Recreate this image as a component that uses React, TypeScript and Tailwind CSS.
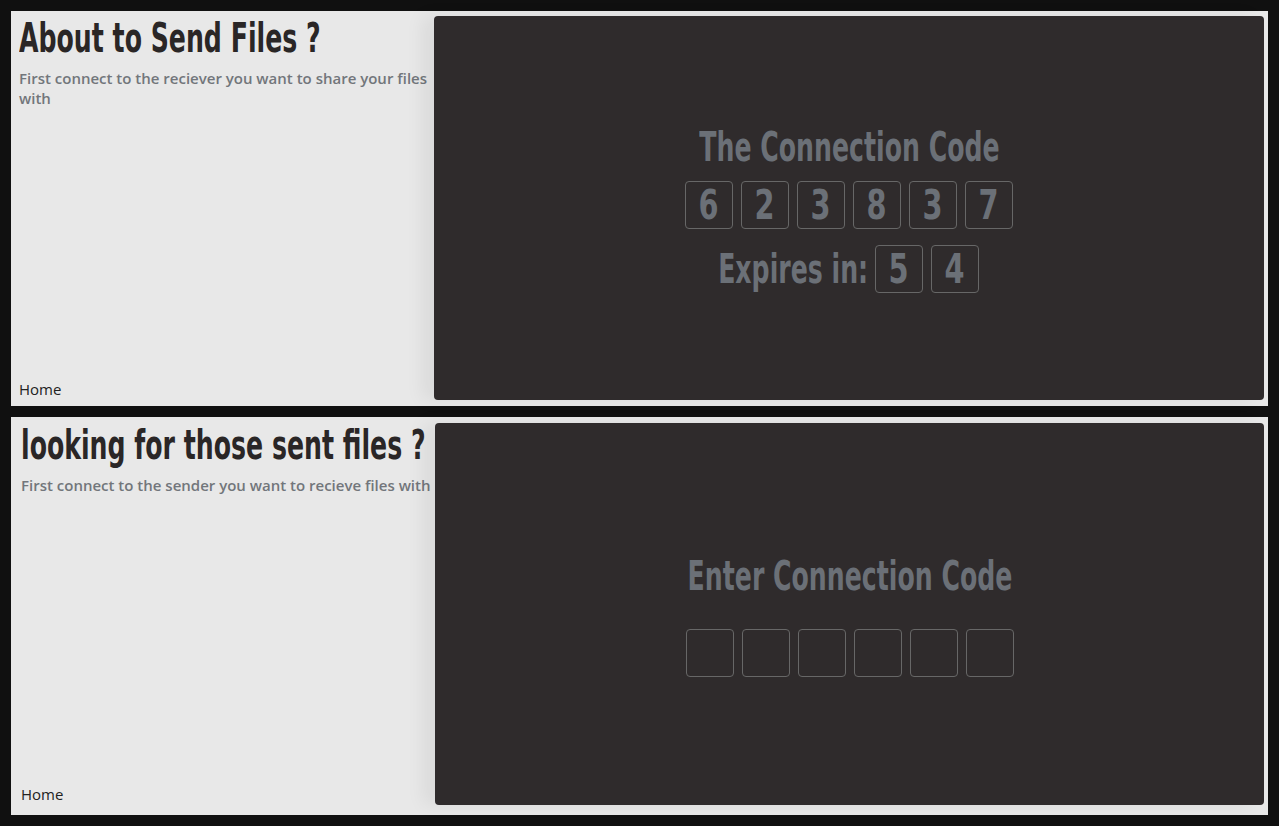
import React from 'react';

// no condensed face is installed, so the Oswald-like headings are DejaVu Condensed squeezed a bit
const headFont = { fontFamily: '"DejaVu Sans Condensed", "Liberation Sans", sans-serif' };

const CodeBox: React.FC<{ value?: string }> = ({ value = '' }) => (
  <div className="w-[48px] h-[48px] border border-[#676767] rounded-[4px] flex items-center justify-center text-[40px] leading-[48px] font-bold text-[#6b7077]">
    <span className="inline-block scale-x-[0.8]">{value}</span>
  </div>
);

const Side: React.FC<{ title: string; sub: string; className?: string }> = ({ title, sub, className = '' }) => (
  <div className={`shrink-0 flex flex-col justify-between ${className}`}>
    <div>
      <h1 className="text-[40px] leading-[44px] font-bold text-[#2a2626] whitespace-nowrap" style={headFont}>
        <span className="inline-block origin-left scale-x-[0.7]">{title}</span>
      </h1>
      <p className="mt-[8px] text-[15px] leading-[20px] font-semibold text-[#72767b] font-['Open_Sans',sans-serif]">{sub}</p>
    </div>
    <div className="text-[15px] text-[#222] font-['Open_Sans',sans-serif]">Home</div>
  </div>
);

const Title: React.FC<{ children: React.ReactNode }> = ({ children }) => (
  <div className="text-[40px] font-bold text-[#6b7077] leading-[48px] whitespace-nowrap">
    <span className="inline-block scale-x-[0.7]">{children}</span>
  </div>
);

export default function App() {
  const code = ['6', '2', '3', '8', '3', '7'];
  return (
    <div className="min-h-screen bg-[#101010] p-[11px] flex flex-col gap-[11px]">
      <section className="h-[395px] bg-[#e8e8e8] flex pr-[4px] pt-[5px] pb-[6px]">
        <Side
          className="w-[423px] pl-[8px]"
          title="About to Send Files ?"
          sub="First connect to the reciever you want to share your files with"
        />
        <div className="flex-1 bg-[#2f2b2c] rounded-[4px] shadow-[-12px_0_18px_rgba(0,0,0,0.06)] flex flex-col items-center justify-center" style={headFont}>
          <Title>The Connection Code</Title>
          <div className="flex gap-[8px] mt-[10px]">
            {code.map((c, i) => (
              <CodeBox key={i} value={c} />
            ))}
          </div>
          <div className="flex items-center gap-[8px] mt-[16px]">
            <div className="w-[148px] flex justify-center text-[40px] leading-[48px] font-bold text-[#6b7077] whitespace-nowrap">
              <span className="inline-block scale-x-[0.7]">Expires in:</span>
            </div>
            <CodeBox value="5" />
            <CodeBox value="4" />
          </div>
        </div>
      </section>
      <section className="h-[398px] bg-[#e8e8e8] flex pr-[4px] pt-[6px] pb-[10px]">
        <Side
          className="w-[424px] pl-[10px]"
          title="looking for those sent files ?"
          sub="First connect to the sender you want to recieve files with"
        />
        <div className="flex-1 bg-[#2f2b2c] rounded-[4px] shadow-[-12px_0_18px_rgba(0,0,0,0.06)] flex flex-col items-center justify-center" style={headFont}>
          <Title>Enter Connection Code</Title>
          <div className="flex gap-[8px] mt-[29px]">
            {Array.from({ length: 6 }).map((_, i) => (
              <CodeBox key={i} />
            ))}
          </div>
        </div>
      </section>
    </div>
  );
}
